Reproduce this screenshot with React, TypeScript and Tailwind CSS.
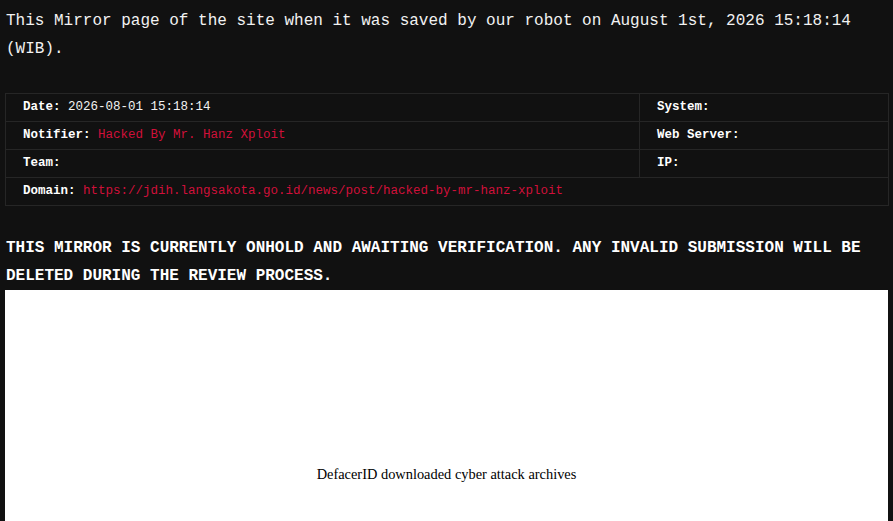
const ROWS = [
  { left: { label: "Date:", value: "2026-08-01 15:18:14", red: false }, right: "System:" },
  { left: { label: "Notifier:", value: "Hacked By Mr. Hanz Xploit", red: true }, right: "Web Server:" },
  { left: { label: "Team:", value: "", red: false }, right: "IP:" },
];

export default function App() {
  return (
    <div
      className="min-h-screen h-[521px] overflow-hidden bg-[#111111] text-[#f2f2f2] flex flex-col px-[5px]"
      style={{ fontFamily: "'Liberation Mono', 'DejaVu Sans Mono', monospace" }}
    >
      <p className="text-[16px] leading-7 pt-[7px] pl-px">
        This Mirror page of the site when it was saved by our robot on August 1st, 2026 15:18:14 (WIB).
      </p>

      <table className="mt-[30px] w-[884px] border-collapse border border-[#2a2a2a] text-[12.5px] leading-[27px]">
        <tbody>
          {ROWS.map((row) => (
            <tr key={row.right}>
              <td className="border border-[#262626] pl-[17px] w-[634px]">
                <span className="font-bold text-white">{row.left.label}</span>
                {row.left.value && (
                  <span className={row.left.red ? "text-[#d0103a]" : "text-[#f2f2f2]"}> {row.left.value}</span>
                )}
              </td>
              <td className="border border-[#262626] pl-[17px]">
                <span className="font-bold text-white">{row.right}</span>
              </td>
            </tr>
          ))}
          <tr>
            <td colSpan={2} className="border border-[#262626] pl-[17px]">
              <span className="font-bold text-white">Domain:</span>
              <span className="text-[#d0103a]"> https://jdih.langsakota.go.id/news/post/hacked-by-mr-hanz-xploit</span>
            </td>
          </tr>
        </tbody>
      </table>

      <h2 className="mt-[28px] pl-px text-[16px] leading-7 font-bold text-white">
        THIS MIRROR IS CURRENTLY ONHOLD AND AWAITING VERIFICATION. ANY INVALID SUBMISSION WILL BE DELETED DURING THE REVIEW PROCESS.
      </h2>

      <div className="w-[883px] flex-1 bg-white flex justify-center">
        <p
          className="mt-[174px] text-[14.4px] text-black"
          style={{ fontFamily: "'Liberation Serif', 'Times New Roman', serif" }}
        >
          DefacerID downloaded cyber attack archives
        </p>
      </div>
    </div>
  );
}
